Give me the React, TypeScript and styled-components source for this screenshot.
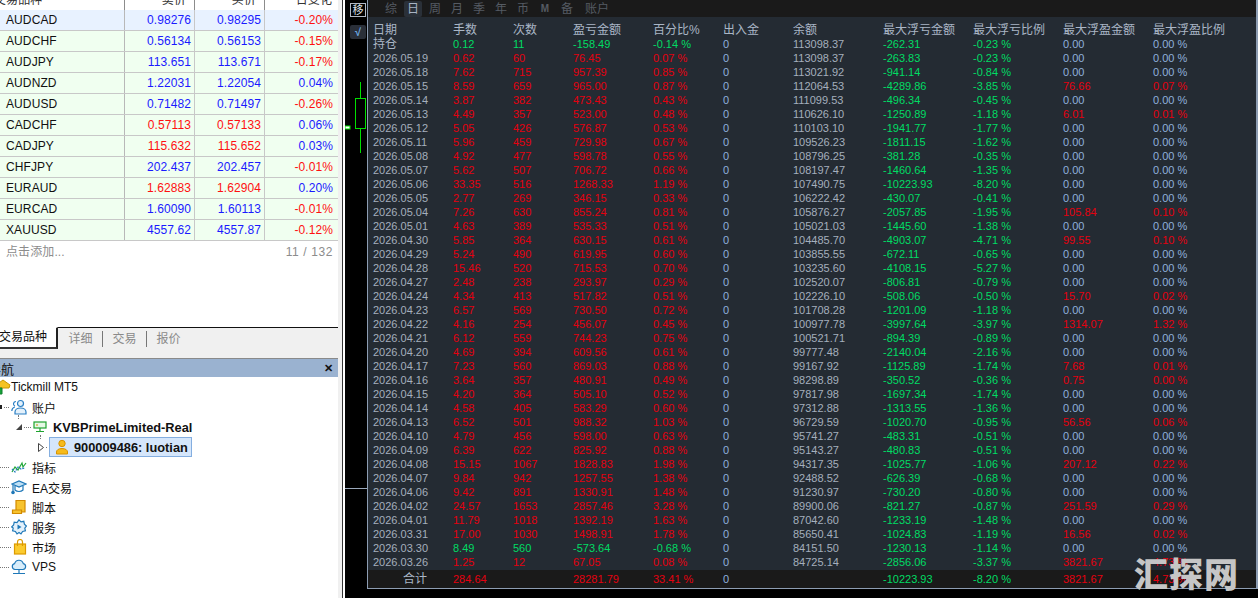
import { FC, ReactNode } from "react";
import styled, { createGlobalStyle } from "styled-components";

const symbols = [
  ["AUDCAD", "0.98276", "0.98295", "-0.20%", "blue"],
  ["AUDCHF", "0.56134", "0.56153", "-0.15%", "blue"],
  ["AUDJPY", "113.651", "113.671", "-0.17%", "blue"],
  ["AUDNZD", "1.22031", "1.22054", "0.04%", "blue"],
  ["AUDUSD", "0.71482", "0.71497", "-0.26%", "blue"],
  ["CADCHF", "0.57113", "0.57133", "0.06%", "red"],
  ["CADJPY", "115.632", "115.652", "0.03%", "red"],
  ["CHFJPY", "202.437", "202.457", "-0.01%", "blue"],
  ["EURAUD", "1.62883", "1.62904", "0.20%", "red"],
  ["EURCAD", "1.60090", "1.60113", "-0.01%", "blue"],
  ["XAUUSD", "4557.62", "4557.87", "-0.12%", "blue"],
];

const headers = ["日期", "手数", "次数", "盈亏金额", "百分比%", "出入金", "余额", "最大浮亏金额", "最大浮亏比例", "最大浮盈金额", "最大浮盈比例"];

// date, lots, count, pnl, pct, balance, dd amount, dd pct, float amount, float pct
const rows = [
  "持仓|0.12|11|-158.49|-0.14|113098.37|-262.31|-0.23|0.00|0.00",
  "2026.05.19|0.62|60|76.45|0.07|113098.37|-263.83|-0.23|0.00|0.00",
  "2026.05.18|7.62|715|957.39|0.85|113021.92|-941.14|-0.84|0.00|0.00",
  "2026.05.15|8.59|659|965.00|0.87|112064.53|-4289.86|-3.85|76.66|0.07",
  "2026.05.14|3.87|382|473.43|0.43|111099.53|-496.34|-0.45|0.00|0.00",
  "2026.05.13|4.49|357|523.00|0.48|110626.10|-1250.89|-1.18|6.01|0.01",
  "2026.05.12|5.05|426|576.87|0.53|110103.10|-1941.77|-1.77|0.00|0.00",
  "2026.05.11|5.96|459|729.98|0.67|109526.23|-1811.15|-1.62|0.00|0.00",
  "2026.05.08|4.92|477|598.78|0.55|108796.25|-381.28|-0.35|0.00|0.00",
  "2026.05.07|5.62|507|706.72|0.66|108197.47|-1460.64|-1.35|0.00|0.00",
  "2026.05.06|33.35|516|1268.33|1.19|107490.75|-10223.93|-8.20|0.00|0.00",
  "2026.05.05|2.77|269|346.15|0.33|106222.42|-430.07|-0.41|0.00|0.00",
  "2026.05.04|7.26|630|855.24|0.81|105876.27|-2057.85|-1.95|105.84|0.10",
  "2026.05.01|4.63|389|535.33|0.51|105021.03|-1445.60|-1.38|0.00|0.00",
  "2026.04.30|5.85|364|630.15|0.61|104485.70|-4903.07|-4.71|99.55|0.10",
  "2026.04.29|5.24|490|619.95|0.60|103855.55|-672.11|-0.65|0.00|0.00",
  "2026.04.28|15.46|520|715.53|0.70|103235.60|-4108.15|-5.27|0.00|0.00",
  "2026.04.27|2.48|238|293.97|0.29|102520.07|-806.81|-0.79|0.00|0.00",
  "2026.04.24|4.34|413|517.82|0.51|102226.10|-508.06|-0.50|15.70|0.02",
  "2026.04.23|6.57|569|730.50|0.72|101708.28|-1201.09|-1.18|0.00|0.00",
  "2026.04.22|4.16|254|456.07|0.45|100977.78|-3997.64|-3.97|1314.07|1.32",
  "2026.04.21|6.12|559|744.23|0.75|100521.71|-894.39|-0.89|0.00|0.00",
  "2026.04.20|4.69|394|609.56|0.61|99777.48|-2140.04|-2.16|0.00|0.00",
  "2026.04.17|7.23|560|869.03|0.88|99167.92|-1125.89|-1.74|7.68|0.01",
  "2026.04.16|3.64|357|480.91|0.49|98298.89|-350.52|-0.36|0.75|0.00",
  "2026.04.15|4.20|364|505.10|0.52|97817.98|-1697.34|-1.74|0.00|0.00",
  "2026.04.14|4.58|405|583.29|0.60|97312.88|-1313.55|-1.36|0.00|0.00",
  "2026.04.13|6.52|501|988.32|1.03|96729.59|-1020.70|-0.95|56.56|0.06",
  "2026.04.10|4.79|456|598.00|0.63|95741.27|-483.31|-0.51|0.00|0.00",
  "2026.04.09|6.39|622|825.92|0.88|95143.27|-480.83|-0.51|0.00|0.00",
  "2026.04.08|15.15|1067|1828.83|1.98|94317.35|-1025.77|-1.06|207.12|0.22",
  "2026.04.07|9.84|942|1257.55|1.38|92488.52|-626.39|-0.68|0.00|0.00",
  "2026.04.06|9.42|891|1330.91|1.48|91230.97|-730.20|-0.80|0.00|0.00",
  "2026.04.02|24.57|1653|2857.46|3.28|89900.06|-821.27|-0.87|251.59|0.29",
  "2026.04.01|11.79|1018|1392.19|1.63|87042.60|-1233.19|-1.48|0.00|0.00",
  "2026.03.31|17.00|1030|1498.91|1.78|85650.41|-1024.83|-1.19|16.56|0.02",
  "2026.03.30|8.49|560|-573.64|-0.68|84151.50|-1230.13|-1.14|0.00|0.00",
  "2026.03.26|1.25|12|67.05|0.08|84725.14|-2856.06|-3.37|3821.67|4.73",
].map((r) => r.split("|"));

const periodTabs = ["综", "日", "周", "月", "季", "年", "币", "M", "备", "账户"];

const toneColor = { red: "#e4000f", green: "#00dc64", blue: "#8fb0dc", grey: "#a4afbd", head: "#aab6c6" };
type Tone = keyof typeof toneColor;

const AccountsIcon = () => (
  <svg width="16" height="16" viewBox="0 0 16 16" fill="none" stroke="#2a7fc4" strokeWidth="1.2">
    <path d="M5 2.5a2.5 2.5 0 0 0-1 4.8M.8 12c0-2 1-3.4 3-4" />
    <circle cx="9.5" cy="4.5" r="3" fill="#e4f1fb" />
    <path d="M4 15v-2c0-2 2-4 5.5-4s5.5 2 5.5 4v2z" fill="#e4f1fb" />
  </svg>
);
const ServerIcon = () => (
  <svg width="14" height="14" viewBox="0 0 14 14" fill="none" stroke="#1ea32e" strokeWidth="1.2">
    <rect x="1" y="2" width="12" height="6" fill="#e5f8e5" />
    <path d="M7 8v3M3 11.5h8" />
    <path d="M3 5h2" stroke="#c89000" />
  </svg>
);
const PersonIcon = () => (
  <svg width="14" height="16" viewBox="0 0 14 16">
    <circle cx="7" cy="4.5" r="3.2" fill="#f6bb1c" stroke="#d89400" />
    <path d="M1.5 15v-2c0-2 2-3.5 5.5-3.5s5.5 1.500 5.500 3.500v2z" fill="#f6bb1c" stroke="#d89400" />
  </svg>
);
const IndicatorIcon = () => (
  <svg width="16" height="16" viewBox="0 0 16 16" fill="none" strokeWidth="1.2">
    <path d="M1 13l3-5 3 3 4-7 1 4 3-4" stroke="#22a63a" />
    <path d="M1 10l3 3 3-5 3 2 4-1" stroke="#2a7fc4" strokeDasharray="2 1" />
  </svg>
);
const CapIcon = () => (
  <svg width="16" height="16" viewBox="0 0 16 16" fill="none" stroke="#1f78b8" strokeWidth="1.2">
    <path d="M1 5l7-3 7 3-7 3z" fill="#bfe0f5" />
    <path d="M4 7v4c2 2 6 2 8 0V7" />
    <path d="M2 6v6" />
    <circle cx="2" cy="13.5" r="1.2" fill="#1f78b8" />
  </svg>
);
const ScriptIcon = () => (
  <svg width="16" height="16" viewBox="0 0 16 16" fill="#f7c32e" stroke="#d28a00" strokeWidth="1.2">
    <path d="M5 1.500h9V13H5z" />
    <path d="M1.500 11h9v3.500h-9z" />
  </svg>
);
const GearIcon = () => (
  <svg width="16" height="16" viewBox="0 0 16 16" fill="#e4f1fb" stroke="#1f78b8" strokeWidth="1.2">
    <path d="M8 .8l2 2 2.8-.5.6 2.8 2 2-1.600 2 .6 2.800-2.800.6-1.600 2.400-2-1.400-2 1.400-1.600-2.400-2.800-.6.6-2.800L.6 8l2-2 .6-2.900 2.800.5z" />
    <path d="M6.500 5.500v5l4-2.500z" fill="#1f78b8" stroke="none" />
  </svg>
);
const BagIcon = () => (
  <svg width="14" height="16" viewBox="0 0 14 16" fill="none" stroke="#dc9a00" strokeWidth="1.2">
    <rect x="1.500" y="5" width="11" height="10" fill="#fbcb2e" />
    <path d="M4.500 7V3a2.500 2.500 0 0 1 5 0v4" />
  </svg>
);
const CloudIcon = () => (
  <svg width="16" height="16" viewBox="0 0 16 16" fill="none" stroke="#1f78b8" strokeWidth="1.2">
    <path d="M4 10.500a3 3 0 0 1-.4-5.900 4.500 4.500 0 0 1 8.700 0A3 3 0 0 1 12 10.500z" fill="#d8edfa" />
    <path d="M8 10.500v3.500M2 14.500h12" />
  </svg>
);
const TickmillIcon = () => (
  <svg width="16" height="16" viewBox="0 0 16 16" fill="#f5c322" stroke="#c99500" strokeWidth="1">
    <path d="M8 1l7 5-1 3H2L1 6z" />
    <path d="M4 9h3v6H4z" fill="#18a23a" stroke="#0f7e2a" />
  </svg>
);

type TreeNode = {
  indent: number;
  expander?: "solid" | "open" | "tip";
  dots?: number;
  label: string;
  icon: ReactNode;
  bold?: boolean;
  selected?: boolean;
  stem?: boolean;
  gap: number;
};

const Tree: TreeNode[] = [
  { indent: -5, label: "Tickmill MT5", icon: <TickmillIcon />, gap: 0 },
  { indent: 0, expander: "tip", dots: 5, label: "账户", icon: <AccountsIcon />, gap: 5 },
  { indent: 16, expander: "solid", dots: 7, label: "KVBPrimeLimited-Real", icon: <ServerIcon />, bold: true, stem: true, gap: 6 },
  { indent: 38, expander: "open", dots: 1, label: "900009486: luotian", icon: <PersonIcon />, bold: true, selected: true, stem: true, gap: 5 },
  { indent: 0, dots: 9, label: "指标", icon: <IndicatorIcon />, gap: 5 },
  { indent: 0, dots: 9, label: "EA交易", icon: <CapIcon />, gap: 5 },
  { indent: 0, dots: 9, label: "脚本", icon: <ScriptIcon />, gap: 5 },
  { indent: 0, dots: 9, label: "服务", icon: <GearIcon />, gap: 5 },
  { indent: 0, dots: 11, label: "市场", icon: <BagIcon />, gap: 5 },
  { indent: 0, dots: 9, label: "VPS", icon: <CloudIcon />, gap: 5 },
];

const Expander: FC<{ kind: "solid" | "open" | "tip" }> = ({ kind }) =>
  kind === "open" ? (
    <svg width="6" height="9" viewBox="0 0 6 9" fill="#fff" stroke="#444"><path d="M.5.5l5 4-5 4z" /></svg>
  ) : kind === "solid" ? (
    <svg width="6" height="6" viewBox="0 0 6 6" fill="#444"><path d="M6 0v6H0z" /></svg>
  ) : (
    <svg width="2" height="4" viewBox="0 0 2 4" fill="#222"><path d="M0 0h2v4H0z" /></svg>
  );

const App: FC = () => (
  <Page>
    <GlobalStyle />
    <LeftPane>
      <WatchList>
        <WatchHead>
          <HeadCell>交易品种</HeadCell>
          <HeadCell $right>卖价</HeadCell>
          <HeadCell $right>买价</HeadCell>
          <HeadCell $right $last>日变化</HeadCell>
        </WatchHead>
        {symbols.map(([sym, bid, ask, chg, tone], i) => (
          <WatchRow key={sym} $active={i === 0}>
            <SymbolCell>{sym}</SymbolCell>
            <PriceCell $color={tone === "red" ? "#ff1010" : "#1a1aff"}>{bid}</PriceCell>
            <PriceCell $color={tone === "red" ? "#ff1010" : "#1a1aff"}>{ask}</PriceCell>
            <ChangeCell $color={chg.startsWith("-") ? "#ff1010" : "#1a1aff"}>{chg}</ChangeCell>
          </WatchRow>
        ))}
        <AddRow>
          <span>点击添加...</span>
          <Counter>11 / 132</Counter>
        </AddRow>
      </WatchList>
      <TabStrip>
        <ActiveTab>交易品种</ActiveTab>
        <GreyTab>详细</GreyTab>
        <GreyTab $sep>交易</GreyTab>
        <GreyTab $sep>报价</GreyTab>
      </TabStrip>
      <NavHeader>
        <NavTitle>导航</NavTitle>
        <NavClose>✕</NavClose>
      </NavHeader>
      <TreeList>
        {Tree.map((n) => (
          <TreeRow key={n.label} $indent={n.indent} $stem={n.stem}>
            {n.expander && <Expander kind={n.expander} />}
            {n.dots && <Dots $w={n.dots} />}
            <TreeItem $selected={n.selected} $gap={n.gap} $bold={n.bold}>
              {n.icon}
              <span>{n.label}</span>
            </TreeItem>
          </TreeRow>
        ))}
      </TreeList>
    </LeftPane>
    <Divider />
    <ChartStrip>
      <svg width="22" height="598" viewBox="0 0 22 598">
        <path d="M15.5 82v16M15.5 128v25" stroke="#00e000" fill="none" />
        <rect x="10.5" y="98.5" width="10" height="30" stroke="#00e000" fill="#000" />
        <rect x="0" y="126" width="5" height="3" fill="#fff" stroke="#00e000" strokeWidth="1" />
        <path d="M0 488.5h22" stroke="#9aa8bb" />
      </svg>
      <MoveButton>移</MoveButton>
      <CheckButton>√</CheckButton>
    </ChartStrip>
    <ReportPanel>
      <PeriodBar>
        {periodTabs.map((t) => (
          <PeriodTab key={t} $wide={t.length > 1} $small={t === "M"}>
            {t === "日" ? <PeriodActive>{t}</PeriodActive> : t}
          </PeriodTab>
        ))}
      </PeriodBar>
      <Table>
        <TableRow>
          {headers.map((h) => (
            <Cell key={h} $tone="head" $cjk>{h}</Cell>
          ))}
        </TableRow>
        {rows.map((r) => {
          const tone: Tone = r[0] === "持仓" || r[0] === "2026.03.30" ? "green" : "red";
          const floating: Tone = r[8] === "0.00" ? "blue" : "red";
          return (
            <TableRow key={r[0]}>
              <Cell $tone={r[0] === "持仓" ? "head" : "grey"} $cjk={r[0] === "持仓"}>{r[0]}</Cell>
              <Cell $tone={tone}>{r[1]}</Cell>
              <Cell $tone={tone}>{r[2]}</Cell>
              <Cell $tone={tone}>{r[3]}</Cell>
              <Cell $tone={tone}>{r[4]} %</Cell>
              <Cell $tone="blue">0</Cell>
              <Cell $tone="grey">{r[5]}</Cell>
              <Cell $tone="green">{r[6]}</Cell>
              <Cell $tone="green">{r[7]} %</Cell>
              <Cell $tone={floating}>{r[8]}</Cell>
              <Cell $tone={floating}>{r[9]} %</Cell>
            </TableRow>
          );
        })}
      </Table>
      <TotalRow>
        <TotalLabel>合计</TotalLabel>
        <Cell $tone="red">284.64</Cell>
        <Cell $tone="red" />
        <Cell $tone="red">28281.79</Cell>
        <Cell $tone="red">33.41 %</Cell>
        <Cell $tone="blue">0</Cell>
        <Cell $tone="grey" />
        <Cell $tone="green">-10223.93</Cell>
        <Cell $tone="green">-8.20 %</Cell>
        <Cell $tone="red">3821.67</Cell>
        <Cell $tone="red">4.73 %</Cell>
      </TotalRow>
    </ReportPanel>
    <Watermark>汇探网</Watermark>
  </Page>
);

export default App;

const GlobalStyle = createGlobalStyle`
  html, body { margin: 0; padding: 0; background: #000; }
  * { box-sizing: border-box; }
`;

const Page = styled.div`
  position: relative;
  display: flex;
  width: 1258px;
  height: 598px;
  overflow: hidden;
  background: #000;
  font-family: "Liberation Sans", "Noto Sans CJK SC", sans-serif;
`;

const LeftPane = styled.div`
  display: flex;
  flex-direction: column;
  width: 342px;
  height: 598px;
  background: #fff;
  border-right: 4px solid #f0f0f0;
`;

const WatchList = styled.div`
  height: 327px;
  font-size: 12px;
  letter-spacing: 0.1px;
`;

const watchColumns = "125px 70px 70px 73px";

const WatchHead = styled.div`
  display: grid;
  grid-template-columns: ${watchColumns};
  height: 10px;
  overflow: hidden;
  background: #fff;
`;

const HeadCell = styled.div<{ $right?: boolean; $last?: boolean }>`
  height: 10px;
  line-height: 0;
  padding: 0 ${(p) => (p.$last ? "6px" : "8px")} 0 0;
  color: #333;
  text-align: ${(p) => (p.$right ? "right" : "left")};
  text-indent: ${(p) => (p.$right ? "0" : "-6px")};
  border-right: ${(p) => (p.$last ? "none" : "1px solid #8c8c8c")};
`;

const WatchRow = styled.div<{ $active?: boolean }>`
  display: grid;
  grid-template-columns: ${watchColumns};
  height: 21px;
  background: ${(p) => (p.$active ? "#e8f2ff" : "#f0fff0")};
  border-bottom: 1px solid #c8c8c8;
  line-height: 20px;
`;

const SymbolCell = styled.div`
  padding-left: 6px;
  color: #111;
  border-right: 1px solid #b8b8b8;
`;

const PriceCell = styled.div<{ $color: string }>`
  padding-right: 3px;
  text-align: right;
  color: ${(p) => p.$color};
  border-right: 1px solid #c8c8c8;
`;

const ChangeCell = styled.div<{ $color: string }>`
  padding-right: 5px;
  text-align: right;
  color: ${(p) => p.$color};
`;

const AddRow = styled.div`
  display: flex;
  justify-content: space-between;
  height: 22px;
  padding: 0 5px 0 6px;
  line-height: 22px;
  color: #8c8c8c;
`;

const Counter = styled.span`
  letter-spacing: 0.6px;
`;

const TabStrip = styled.div`
  display: flex;
  align-items: flex-start;
  height: 31px;
  background: #f0f0f0;
  border-top: 1px solid #111;
  font-size: 12px;
`;

const ActiveTab = styled.div`
  width: 58px;
  height: 22px;
  margin-top: -1px;
  padding-top: 1px;
  background: #fff;
  border-top: 1px solid #fff;
  border-right: 2px solid #222;
  border-bottom: 2px solid #333;
  text-indent: -1px;
  white-space: nowrap;
  color: #111;
  line-height: 17px;
`;

const GreyTab = styled.div<{ $sep?: boolean }>`
  width: 44px;
  height: 16px;
  margin-top: 3px;
  text-align: center;
  line-height: 16px;
  color: #8a8a8a;
  border-left: ${(p) => (p.$sep ? "1px solid #777" : "1px solid transparent")};
`;

const NavHeader = styled.div`
  display: flex;
  align-items: center;
  justify-content: space-between;
  height: 19px;
  padding-right: 5px;
  background: #9ab2d0;
  border-top: 1px solid #8a8a8a;
  font-size: 13px;
  color: #111;
`;

const NavTitle = styled.span`
  margin-left: -12px;
`;

const NavClose = styled.span`
  font-size: 11px;
  font-weight: 700;
  line-height: 1;
`;

const TreeList = styled.div`
  display: flex;
  flex-direction: column;
  font-size: 12px;
  color: #111;
`;

const TreeRow = styled.div<{ $indent: number; $stem?: boolean }>`
  position: relative;
  display: flex;
  align-items: center;
  gap: 2px;
  height: 20px;
  margin-left: ${(p) => p.$indent}px;
  ${(p) =>
    p.$stem
      ? `&::before {
    content: "";
    position: absolute;
    left: 2px;
    top: -2px;
    height: 4px;
    border-left: 1px dotted #777;
  }`
      : ""}
`;

const Dots = styled.span<{ $w: number }>`
  width: ${(p) => p.$w}px;
  border-bottom: 1px dotted #777;
`;

const TreeItem = styled.div<{ $selected?: boolean; $gap: number; $bold?: boolean }>`
  display: flex;
  align-items: center;
  gap: ${(p) => p.$gap}px;
  height: 20px;
  font-weight: ${(p) => (p.$bold ? 700 : 400)};
  font-size: ${(p) => (p.$bold ? "12.8px" : "12px")};
  white-space: nowrap;
  ${(p) => (p.$selected ? "padding: 0 3px 0 5px; background: #d5e6fb; border: 1px solid #84aee0;" : "")}
`;

const Divider = styled.div`
  width: 3px;
  height: 598px;
  background: #fff;
  border-left: 1px solid #333;
`;

const ChartStrip = styled.div`
  position: relative;
  width: 22px;
  height: 598px;
  background: #000;
  svg { display: block; }
`;

const MoveButton = styled.div`
  position: absolute;
  left: 5px;
  top: 3px;
  width: 16px;
  height: 14px;
  border: 1px solid #b0b8c4;
  color: #dfe4ea;
  font-size: 11px;
  line-height: 12px;
  text-align: center;
`;

const CheckButton = styled.div`
  position: absolute;
  left: 5px;
  top: 25px;
  width: 16px;
  height: 14px;
  border-radius: 2px;
  background: #2a2f38;
  color: #6aa8e0;
  font-size: 11px;
  font-weight: 700;
  line-height: 14px;
  text-align: center;
`;

const ReportPanel = styled.div`
  flex: 1;
  display: flex;
  flex-direction: column;
  height: 589px;
  background: #242b33;
  border-left: 1px solid #8d9db3;
  border-right: 2px solid #8d9db3;
  border-bottom: 1px solid #8d9db3;
  font-size: 11px;
`;

const PeriodBar = styled.div`
  display: flex;
  align-items: center;
  height: 17px;
  padding-left: 12px;
  background: #1a1a1a;
  font-size: 12px;
  color: #555b63;
`;

const PeriodTab = styled.div<{ $wide?: boolean; $small?: boolean }>`
  min-width: 22px;
  height: 16px;
  line-height: 16px;
  text-align: center;
  padding: 0 ${(p) => (p.$wide ? "7px" : "0")};
  font-size: ${(p) => (p.$small ? "10px" : "12px")};
  font-weight: ${(p) => (p.$small ? 700 : 400)};
`;

const PeriodActive = styled.span`
  display: block;
  width: 18px;
  margin: 0 2px;
  background: #2a3038;
  border-radius: 2px;
  color: #a8b4c4;
`;

const Table = styled.div`
  flex: 1;
  padding-top: 6px;
`;

const reportColumns = "80px 60px 60px 80px 70px 70px 90px 90px 90px 90px 90px";

const TableRow = styled.div`
  display: grid;
  grid-template-columns: ${reportColumns};
  height: 14px;
  padding-left: 5px;
  line-height: 14px;
`;

const Cell = styled.div<{ $tone: Tone; $cjk?: boolean }>`
  color: ${(p) => toneColor[p.$tone]};
  font-size: ${(p) => (p.$cjk ? "12px" : "11px")};
  white-space: nowrap;
`;

const TotalRow = styled(TableRow)`
  height: 18px;
  background: #1a1a1a;
  line-height: 18px;
`;

const TotalLabel = styled.div`
  padding-left: 30px;
  font-size: 12px;
  color: #aab6c6;
`;

const Watermark = styled.div`
  position: absolute;
  left: 1134px;
  top: 548px;
  font-family: "Noto Sans CJK SC", sans-serif;
  font-size: 34px;
  font-weight: 900;
  line-height: 50px;
  letter-spacing: 1px;
  color: #c6c6c6;
  white-space: nowrap;
`;
